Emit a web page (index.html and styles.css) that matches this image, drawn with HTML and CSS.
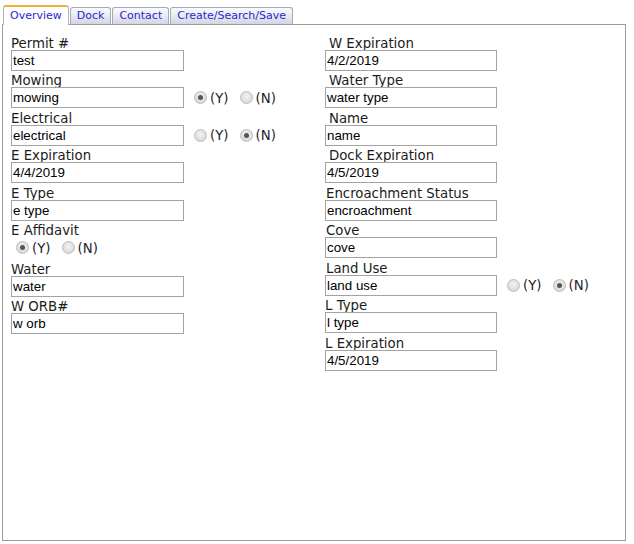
FILE: index.html
```html
<!DOCTYPE html>
<html>
<head>
<meta charset="utf-8">
<link rel="stylesheet" href="styles.css">
</head>
<body>
<div class="tabs">
  <ul class="tabbar">
    <li class="tab active">Overview</li>
    <li class="tab">Dock</li>
    <li class="tab">Contact</li>
    <li class="tab">Create/Search/Save</li>
  </ul>
  <div class="panel">
    <div class="cols">
      <div class="col">
        <div class="field">
          <div class="lbl">Permit #</div>
          <input class="txt" type="text" value="test">
        </div>
        <div class="field">
          <div class="lbl">Mowing</div>
          <div class="row">
            <input class="txt" type="text" value="mowing">
            <span class="radios"><span class="radio on"></span><span class="opt">(Y)</span><span class="radio"></span><span class="opt">(N)</span></span>
          </div>
        </div>
        <div class="field">
          <div class="lbl">Electrical</div>
          <div class="row">
            <input class="txt" type="text" value="electrical">
            <span class="radios"><span class="radio"></span><span class="opt">(Y)</span><span class="radio on"></span><span class="opt">(N)</span></span>
          </div>
        </div>
        <div class="field">
          <div class="lbl">E Expiration</div>
          <input class="txt" type="text" value="4/4/2019">
        </div>
        <div class="field">
          <div class="lbl">E Type</div>
          <input class="txt" type="text" value="e type">
        </div>
        <div class="field">
          <div class="lbl">E Affidavit</div>
          <div class="radiorow"><span class="radio on"></span><span class="opt">(Y)</span><span class="radio"></span><span class="opt">(N)</span></div>
        </div>
        <div class="field">
          <div class="lbl">Water</div>
          <input class="txt" type="text" value="water">
        </div>
        <div class="field">
          <div class="lbl">W ORB#</div>
          <input class="txt" type="text" value="w orb">
        </div>
      </div>
      <div class="col right">
        <div class="field">
          <div class="lbl sp">W Expiration</div>
          <input class="txt" type="text" value="4/2/2019">
        </div>
        <div class="field">
          <div class="lbl sp">Water Type</div>
          <input class="txt" type="text" value="water type">
        </div>
        <div class="field">
          <div class="lbl sp">Name</div>
          <input class="txt" type="text" value="name">
        </div>
        <div class="field">
          <div class="lbl sp">Dock Expiration</div>
          <input class="txt" type="text" value="4/5/2019">
        </div>
        <div class="field">
          <div class="lbl nudge">Encroachment Status</div>
          <input class="txt" type="text" value="encroachment">
        </div>
        <div class="field">
          <div class="lbl nudge">Cove</div>
          <input class="txt" type="text" value="cove">
        </div>
        <div class="field">
          <div class="lbl nudge">Land Use</div>
          <div class="row">
            <input class="txt" type="text" value="land use">
            <span class="radios"><span class="radio"></span><span class="opt">(Y)</span><span class="radio on"></span><span class="opt">(N)</span></span>
          </div>
        </div>
        <div class="field">
          <div class="lbl">L Type</div>
          <input class="txt" type="text" value="l type">
        </div>
        <div class="field">
          <div class="lbl">L Expiration</div>
          <input class="txt" type="text" value="4/5/2019">
        </div>
      </div>
    </div>
  </div>
</div>
</body>
</html>
```
FILE: styles.css
```css
html, body {
  margin: 0;
  padding: 0;
  background: #ffffff;
}

.tabs {
  margin: 5px 0 0 2px;
  width: 624px;
  font-family: "DejaVu Sans", Verdana, sans-serif;
}

.tabbar {
  list-style: none;
  margin: 0;
  padding: 0 0 0 1px;
  display: flex;
  align-items: flex-end;
  gap: 1px;
  height: 19px;
}

.tab {
  position: relative;
  box-sizing: border-box;
  height: 17px;
  padding: 0 6px;
  font-size: 11px;
  line-height: 16px;
  color: #2828d0;
  border: 1px solid #a3aab6;
  border-bottom: none;
  border-radius: 3px 3px 0 0;
  background: linear-gradient(#fbfbfd, #e6e6f0 60%, #d3d3e3);
}

.tab.active {
  height: 20px;
  margin-bottom: -1px;
  line-height: 18px;
  background: #ffffff;
  border-color: #b5b5b5;
  border-top: 2px solid #f2b13c;
  z-index: 1;
}

.panel {
  box-sizing: border-box;
  height: 517px;
  border: 1px solid #9c9c9c;
  padding: 8px 8px 0 8px;
}

.cols {
  display: grid;
  grid-template-columns: 314px 1fr;
}

.field {
  display: flex;
  flex-direction: column;
  align-items: flex-start;
}

.lbl {
  box-sizing: border-box;
  font-size: 13.3px;
  line-height: 13px;
  height: 16.5px;
  padding-top: 3.5px;
  color: #1c1c1c;
  white-space: nowrap;
}

.lbl.sp {
  padding-left: 4px;
}

.lbl.nudge {
  padding-left: 1px;
}

.txt {
  box-sizing: border-box;
  width: 173px;
  height: 21px;
  margin: 0;
  padding: 0 1px;
  border: 1px solid #a3a3a3;
  border-radius: 0;
  background: #ffffff;
  font-family: "Liberation Sans", Arial, sans-serif;
  font-size: 13.33px;
  color: #000000;
  outline: none;
}

.right .txt {
  width: 172px;
}

.row {
  display: flex;
  align-items: center;
}

.radios {
  display: flex;
  align-items: center;
  margin-left: 10px;
}

.radiorow {
  display: flex;
  align-items: center;
  height: 22px;
  padding-left: 5px;
  box-sizing: border-box;
  padding-bottom: 1px;
}

.radio {
  box-sizing: border-box;
  width: 13px;
  height: 13px;
  border-radius: 50%;
  border: 1px solid #bdbdbd;
  background: radial-gradient(circle at 50% 40%, #f4f4f4, #dadada 70%, #cfcfcf);
  display: flex;
  align-items: center;
  justify-content: center;
  flex: none;
}

.radio.on::after {
  content: "";
  width: 5px;
  height: 5px;
  border-radius: 50%;
  background: #555555;
}

.opt {
  font-family: "DejaVu Sans", Verdana, sans-serif;
  font-size: 13.3px;
  line-height: 16px;
  color: #1c1c2c;
  margin-left: 3px;
  margin-right: 11px;
  padding-top: 2px;
}
```
